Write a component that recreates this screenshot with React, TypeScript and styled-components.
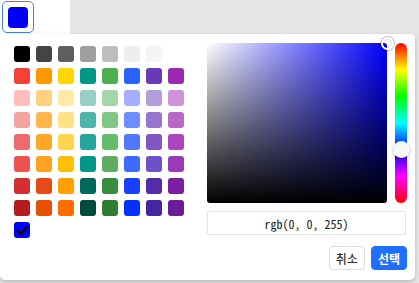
import React from "react";
import styled, { createGlobalStyle } from "styled-components";

const GlobalStyle = createGlobalStyle`
  html, body {
    margin: 0;
    padding: 0;
    background: #e7e7e7;
    font-family: "Noto Sans CJK KR", "Noto Sans", sans-serif;
  }
  * { box-sizing: border-box; }
`;

const Page = styled.div`
  display: flex;
  flex-direction: column;
  align-items: flex-start;
  width: 419px;
  height: 283px;
  overflow: hidden;
`;

const TriggerBar = styled.div`
  width: 70px;
  height: 34px;
  background: #ffffff;
  padding: 1px 0 0 2px;
`;

const TriggerButton = styled.button`
  width: 32px;
  height: 32px;
  padding: 0;
  border: 1px solid #4a80d6;
  border-radius: 5px;
  background: #ffffff;
  display: flex;
  align-items: center;
  justify-content: center;
`;

const TriggerFill = styled.span<{ $color: string }>`
  display: block;
  width: 20px;
  height: 21px;
  border-radius: 4px;
  background: ${(p) => p.$color};
`;

const Popup = styled.div`
  width: 415px;
  height: 246px;
  background: #ffffff;
  border-radius: 0 4px 5px 5px;
  box-shadow: 0 2px 5px rgba(0, 0, 0, 0.22);
  padding: 9px 8px 10px 14px;
  display: flex;
  gap: 23px;
`;

const SwatchGrid = styled.div`
  margin-top: 3px;
  display: grid;
  grid-template-columns: repeat(8, 16px);
  grid-auto-rows: 16px;
  gap: 6px;
  align-content: start;
`;

const Swatch = styled.div<{ $color: string }>`
  width: 16px;
  height: 16px;
  border-radius: 3px;
  background: ${(p) => p.$color};
  display: flex;
  align-items: center;
  justify-content: center;
`;

const RightColumn = styled.div`
  display: flex;
  flex-direction: column;
  width: 200px;
`;

const PickerRow = styled.div`
  display: flex;
  gap: 8px;
`;

const SatPanel = styled.div<{ $hue: string }>`
  position: relative;
  width: 180px;
  height: 160px;
  border-radius: 3px;
  background: linear-gradient(to top, #000000, rgba(0, 0, 0, 0)),
    linear-gradient(to right, #ffffff, rgba(255, 255, 255, 0)),
    ${(p) => p.$hue};
`;

const SatHandle = styled.div`
  position: absolute;
  width: 13px;
  height: 13px;
  margin: -6.5px 0 0 -6.5px;
  border-radius: 50%;
  border: 2px solid #ffffff;
  box-shadow: 0 0 0 1px rgba(0, 0, 0, 0.25), inset 0 0 0 1px rgba(0, 0, 0, 0.15);
`;

const HueSlider = styled.div`
  position: relative;
  width: 12px;
  height: 160px;
  border-radius: 6px;
  background: linear-gradient(
    to bottom,
    #ff0000 0%,
    #ffff00 16.66%,
    #00ff00 33.33%,
    #00ffff 50%,
    #0000ff 66.66%,
    #ff00ff 83.33%,
    #ff0000 100%
  );
`;

const HueHandle = styled.div`
  position: absolute;
  left: 50%;
  width: 17px;
  height: 17px;
  margin: -8.5px 0 0 -8.5px;
  border-radius: 50%;
  background: #f7f7f7;
  box-shadow: 0 1px 3px rgba(0, 0, 0, 0.3);
`;

const ValueInput = styled.input`
  margin-top: 8px;
  width: 199px;
  height: 24px;
  border: 1px solid #e2e2e2;
  border-radius: 2px;
  background: #ffffff;
  text-align: center;
  font-family: "Noto Sans Mono CJK KR", "DejaVu Sans Mono", monospace;
  font-size: 12px;
  color: #222222;
  padding: 0;
  outline: none;
`;

const ButtonRow = styled.div`
  margin-top: 11px;
  display: flex;
  justify-content: flex-end;
  gap: 6px;
`;

const ActionButton = styled.button<{ $primary?: boolean }>`
  height: 24px;
  padding: 0 6px;
  min-width: 36px;
  border-radius: 4px;
  font-family: "Noto Sans CJK KR", "Noto Sans", sans-serif;
  font-size: 12px;
  font-weight: ${(p) => (p.$primary ? 700 : 500)};
  border: 1px solid ${(p) => (p.$primary ? "#1f6fff" : "#dedede")};
  background: ${(p) => (p.$primary ? "#1f6fff" : "#ffffff")};
  color: ${(p) => (p.$primary ? "#ffffff" : "#333333")};
  display: flex;
  align-items: center;
  justify-content: center;
`;

const palette: string[] = [
  "#000000", "#444444", "#5e5e5e", "#9e9e9e", "#bdbdbd", "#eeeeee", "#f5f5f5", "#ffffff",
  "#f44336", "#ff9800", "#ffd600", "#009688", "#4caf50", "#2962ff", "#673ab7", "#9c27b0",
  "#ffbdbd", "#ffd180", "#ffeba8", "#95cfc8", "#a5d6a7", "#a4b0ff", "#b39ddb", "#ce93d8",
  "#f4a39f", "#ffb74d", "#ffe082", "#4db6ac", "#81c784", "#6f8cff", "#9575cd", "#ba68c8",
  "#ef6b6b", "#ffa726", "#ffd54f", "#26a69a", "#66bb6a", "#5277ff", "#7e57c2", "#ab47bc",
  "#ef5350", "#ffa21f", "#ffc107", "#009688", "#5fab62", "#3d6aff", "#7050c8", "#9a3ab8",
  "#d32f2f", "#e64a19", "#ffa000", "#00695c", "#388e3c", "#1a40ff", "#512da8", "#7b1fa2",
  "#b71c1c", "#e65100", "#ff6d00", "#004d40", "#2e7d32", "#0031ff", "#4527a0", "#6a1b9a",
];

const Check = () => (
  <svg width="16" height="16" viewBox="0 0 16 16">
    <path d="M1.8 8.6 L3.6 7.2 L6.3 10.2 L13 3.6 L14.4 5 L6.4 13.6 Z" fill="#000000" />
  </svg>
);

export default function App() {
  const current = "#0000ff";
  const hueFraction = 240 / 360;
  return (
    <>
      <GlobalStyle />
      <Page>
        <TriggerBar>
          <TriggerButton>
            <TriggerFill $color={current} />
          </TriggerButton>
        </TriggerBar>
        <Popup>
          <SwatchGrid>
            {palette.map((c, i) => (
              <Swatch key={i} $color={c} />
            ))}
            <Swatch $color={current}>
              <Check />
            </Swatch>
          </SwatchGrid>
          <RightColumn>
            <PickerRow>
              <SatPanel $hue="#0000ff">
                <SatHandle style={{ left: "100%", top: "0%" }} />
              </SatPanel>
              <HueSlider>
                <HueHandle style={{ top: `${hueFraction * 100}%` }} />
              </HueSlider>
            </PickerRow>
            <ValueInput readOnly value="rgb(0, 0, 255)" />
            <ButtonRow>
              <ActionButton>취소</ActionButton>
              <ActionButton $primary>선택</ActionButton>
            </ButtonRow>
          </RightColumn>
        </Popup>
      </Page>
    </>
  );
}
